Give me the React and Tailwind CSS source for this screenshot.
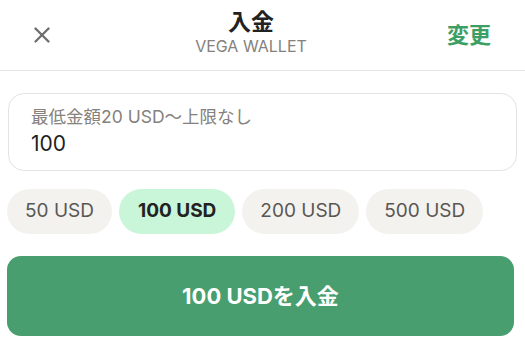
import { X } from 'lucide-react'

const amounts = [50, 100, 200, 500]

export default function App() {
  const selected = 100
  return (
    <div className="w-[525px] h-[359px] bg-white font-['Inter','Noto_Sans_CJK_JP',sans-serif] overflow-hidden">
      <header className="h-[71px] border-b border-[#e6e6e6] flex items-center justify-between pl-[29px] pr-[34px]">
        <X size={26} strokeWidth={2.2} className="text-[#6e6e6e]" />
        <div className="flex flex-col items-center -mt-[7px]">
          <h1 className="text-[23px] font-bold text-[#222] leading-[28px]">入金</h1>
          <p className="text-[16px] text-[#85817c] leading-[20px]">VEGA WALLET</p>
        </div>
        <button className="text-[22px] font-bold text-[#3d9f66]">変更</button>
      </header>

      <div className="mx-[8px] mt-[22px] h-[78px] rounded-[16px] border border-[#e3e3e1] px-[22px] pt-[11px]">
        <label className="block text-[17.5px] text-[#85817c] leading-[24px]">最低金額20 USD～上限なし</label>
        <div className="text-[21px] text-[#1f1f1f] leading-[30px]">100</div>
      </div>

      <div className="flex gap-[7px] mx-[7px] mt-[18px]">
        {amounts.map(a => (
          <button
            key={a}
            className={
              a === selected
                ? 'h-[45px] px-[19px] rounded-full bg-[#c9f5d8] text-[19px] font-bold text-[#222]'
                : 'h-[45px] px-[18px] rounded-full bg-[#f3f2ef] text-[19px] text-[#5a5753]'
            }
          >
            {a} USD
          </button>
        ))}
      </div>

      <button className="mx-[7px] mt-[22px] w-[507px] h-[80px] rounded-[14px] bg-[#489e6e] text-white text-[22px] font-bold">
        100 USDを入金
      </button>
    </div>
  )
}
